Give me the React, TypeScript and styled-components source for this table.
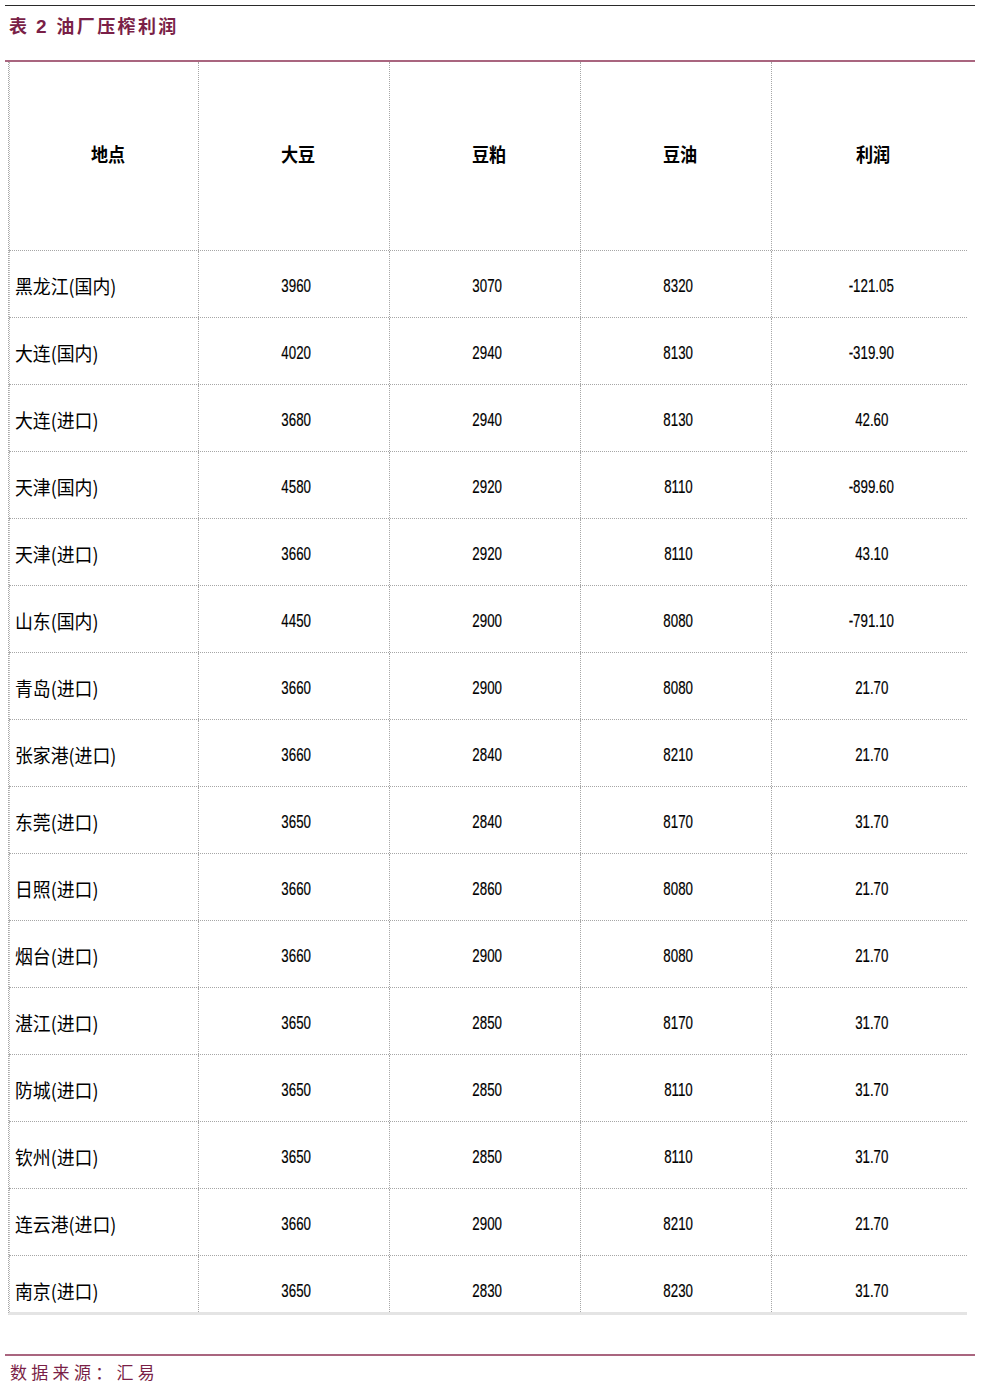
import React from "react";
import styled, { createGlobalStyle } from "styled-components";

const colors = {
  maroon: "#7a1f47",
  maroonLine: "#a9657f",
  grid: "#a6a6a6",
  text: "#000000",
};

const GlobalStyle = createGlobalStyle`
  html, body {
    margin: 0;
    padding: 0;
    background: #ffffff;
  }
  body {
    font-family: "Noto Sans CJK SC", "Noto Sans", sans-serif;
  }
`;

type Row = {
  place: string;
  soybean: string;
  meal: string;
  oil: string;
  profit: string;
};

const rows: Row[] = [
  { place: "黑龙江(国内)", soybean: "3960", meal: "3070", oil: "8320", profit: "-121.05" },
  { place: "大连(国内)", soybean: "4020", meal: "2940", oil: "8130", profit: "-319.90" },
  { place: "大连(进口)", soybean: "3680", meal: "2940", oil: "8130", profit: "42.60" },
  { place: "天津(国内)", soybean: "4580", meal: "2920", oil: "8110", profit: "-899.60" },
  { place: "天津(进口)", soybean: "3660", meal: "2920", oil: "8110", profit: "43.10" },
  { place: "山东(国内)", soybean: "4450", meal: "2900", oil: "8080", profit: "-791.10" },
  { place: "青岛(进口)", soybean: "3660", meal: "2900", oil: "8080", profit: "21.70" },
  { place: "张家港(进口)", soybean: "3660", meal: "2840", oil: "8210", profit: "21.70" },
  { place: "东莞(进口)", soybean: "3650", meal: "2840", oil: "8170", profit: "31.70" },
  { place: "日照(进口)", soybean: "3660", meal: "2860", oil: "8080", profit: "21.70" },
  { place: "烟台(进口)", soybean: "3660", meal: "2900", oil: "8080", profit: "21.70" },
  { place: "湛江(进口)", soybean: "3650", meal: "2850", oil: "8170", profit: "31.70" },
  { place: "防城(进口)", soybean: "3650", meal: "2850", oil: "8110", profit: "31.70" },
  { place: "钦州(进口)", soybean: "3650", meal: "2850", oil: "8110", profit: "31.70" },
  { place: "连云港(进口)", soybean: "3660", meal: "2900", oil: "8210", profit: "21.70" },
  { place: "南京(进口)", soybean: "3650", meal: "2830", oil: "8230", profit: "31.70" },
];

const headers = ["地点", "大豆", "豆粕", "豆油", "利润"];

export default function App() {
  return (
    <Page>
      <GlobalStyle />
      <TopRule />
      <TitleBar>
        <Title>
          表 <TitleNumber>2</TitleNumber> 油厂压榨利润
        </Title>
      </TitleBar>
      <TitleRule />

      <TableFrame>
        <TableRow header>
          {headers.map((h, i) => (
            <Cell key={h} first={i === 0} header>
              <HeaderText>{h}</HeaderText>
            </Cell>
          ))}
        </TableRow>
        {rows.map((r) => (
          <TableRow key={r.place}>
            <Cell first align="left">
              <PlaceText>{r.place}</PlaceText>
            </Cell>
            <Cell>
              <NumberText>{r.soybean}</NumberText>
            </Cell>
            <Cell>
              <NumberText>{r.meal}</NumberText>
            </Cell>
            <Cell>
              <NumberText>{r.oil}</NumberText>
            </Cell>
            <Cell>
              <NumberText>{r.profit}</NumberText>
            </Cell>
          </TableRow>
        ))}
      </TableFrame>

      <BottomRule />
      <Source>数据来源：汇易</Source>
    </Page>
  );
}

const Page = styled.div`
  width: 981px;
  height: 1386px;
  box-sizing: border-box;
  padding: 5px 6px 0 5px;
  overflow: hidden;
`;

const TopRule = styled.div`
  height: 1px;
  background: #2a2a2a;
`;

const TitleBar = styled.div`
  height: 54px;
  box-sizing: border-box;
  padding: 8px 0 0 4px;
`;

const Title = styled.div`
  font-family: "Noto Sans CJK SC", sans-serif;
  font-size: 18px;
  line-height: 22px;
  font-weight: 700;
  letter-spacing: 2.4px;
  color: ${colors.maroon};
  white-space: pre;
`;

const TitleNumber = styled.span`
  font-family: "Liberation Sans", sans-serif;
  font-size: 19px;
  font-weight: 700;
  margin-right: 1px;
`;

const TitleRule = styled.div`
  height: 2px;
  background: ${colors.maroonLine};
`;

const TableFrame = styled.div`
  margin-left: 3px;
  width: 958px;
  height: 1250px;
  overflow: hidden;
  border-left: 1px dotted ${colors.grid};
  border-bottom: 3px solid #e4e4e4;
`;

const TableRow = styled.div<{ header?: boolean }>`
  display: grid;
  grid-template-columns: 189px 191px 191px 191px 195px;
  height: ${(p) => (p.header ? "189px" : "67px")};
  border-bottom: 1px dotted ${colors.grid};
  box-sizing: border-box;
`;

const Cell = styled.div<{ first?: boolean; header?: boolean; align?: "left" | "center" }>`
  display: flex;
  align-items: center;
  justify-content: ${(p) => (p.align === "left" ? "flex-start" : "center")};
  padding: ${(p) =>
    p.align === "left" ? "3px 0 0 5px" : p.header ? "0 0 6px 8px" : "3px 0 0 5px"};
  border-left: ${(p) => (p.first ? "1px dotted #bdbdbd" : `1px dotted ${colors.grid}`)};
  box-sizing: border-box;
  overflow: hidden;
`;

const HeaderText = styled.span`
  font-family: "Noto Sans CJK SC", sans-serif;
  font-size: 19px;
  font-weight: 700;
  color: ${colors.text};
  display: inline-block;
  transform: scaleX(0.9);
`;

const PlaceText = styled.span`
  font-family: "Noto Sans CJK SC", sans-serif;
  font-size: 19px;
  color: ${colors.text};
  display: inline-block;
  white-space: nowrap;
  transform: scaleX(0.94);
  transform-origin: left center;
`;

const NumberText = styled.span`
  font-family: "Liberation Sans", sans-serif;
  font-size: 19px;
  color: ${colors.text};
  display: inline-block;
  white-space: nowrap;
  transform: scaleX(0.7);
  -webkit-text-stroke: 0.2px ${colors.text};
`;

const BottomRule = styled.div`
  margin-top: 39px;
  height: 2px;
  background: ${colors.maroonLine};
`;

const Source = styled.div`
  padding: 5px 0 0 5px;
  font-family: "Noto Sans CJK SC", sans-serif;
  font-size: 17px;
  line-height: 22px;
  letter-spacing: 4.3px;
  color: ${colors.maroon};
`;
